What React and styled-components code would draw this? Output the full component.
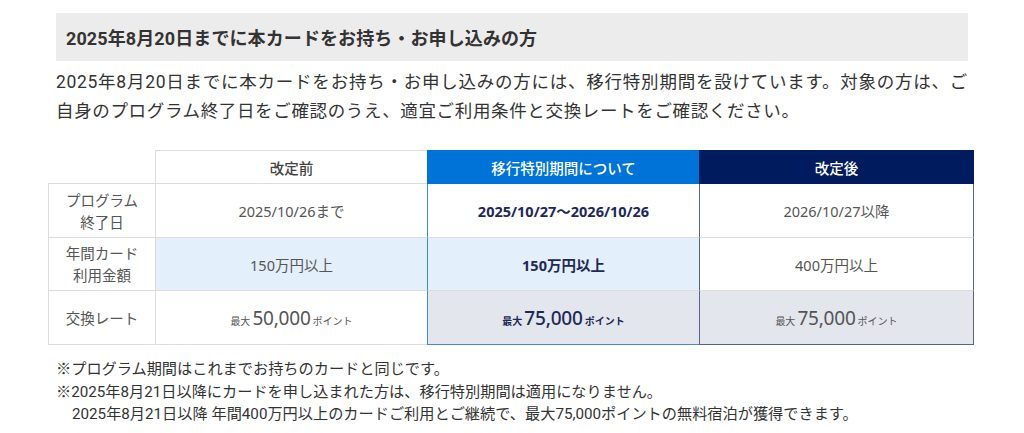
import React from "react";
import styled, { createGlobalStyle } from "styled-components";

const GlobalStyle = createGlobalStyle`
  body {
    margin: 0;
    background: #fff;
    color: #333;
    font-family: "Roboto", "Noto Sans CJK JP", sans-serif;
  }
`;

const LINE = "#dcdcdc";
const BLUE = "#0073d8";
const BLUE_LINE = "#3d8ae0";
const NAVY = "#001b5e";
const NAVY_LINE = "#56638a";

const Page = styled.section`
  width: 912px;
  padding: 13px 0 0 56px;
`;

const Heading = styled.h3`
  margin: 0;
  height: 48px;
  display: flex;
  align-items: center;
  padding: 0 10px;
  background: #ececec;
  font-size: 18px;
  letter-spacing: 0.1px;
  font-weight: 700;
  color: #333;
`;

const Lead = styled.p`
  margin: 7px 0 0;
  font-size: 17.5px;
  letter-spacing: 0.65px;
  line-height: 29px;
  text-align: justify;
  color: #333;
`;

const Table = styled.table`
  margin: 24px 0 0 -8px;
  width: 926px;
  border-collapse: separate;
  border-spacing: 0;
  table-layout: fixed;
  font-family: "Noto Sans", "Noto Sans CJK JP", sans-serif;
  font-size: 14.5px;
  color: #555;
`;

const Row = styled.tr`
  height: ${p => p.$h}px;
`;

const headStyles = {
  empty: `background: #fff; border-bottom: 1px solid ${LINE};`,
  base: `background: #fff; color: #444; border: 1px solid ${LINE}; border-right: 0;`,
  trans: `background: ${BLUE}; color: #fff; border: 1px solid ${BLUE}; border-right: 0;`,
  after: `background: ${NAVY}; color: #fff; border: 1px solid ${NAVY};`
};

const HeadCell = styled.th`
  padding: 0;
  font-weight: 500;
  font-size: 14.5px;
  text-align: center;
  ${p => headStyles[p.$tone]}
`;

const Label = styled.th`
  padding: 0;
  font-weight: 400;
  line-height: 22px;
  text-align: center;
  color: #555;
  border-left: 1px solid ${LINE};
  border-bottom: 1px solid ${LINE};
`;

const fills = {
  none: "#fff",
  blue: "#e3effa",
  gray: "#e4e6ed"
};

const lines = {
  base: LINE,
  trans: BLUE_LINE,
  after: NAVY_LINE
};

const Cell = styled.td`
  padding: 0;
  text-align: center;
  background: ${p => fills[p.$fill || "none"]};
  border-left: 1px solid ${p => lines[p.$tone]};
  border-bottom: 1px solid ${p => (p.$last ? lines[p.$tone] : LINE)};
  border-right: ${p => (p.$tone === "after" ? `1px solid ${NAVY_LINE}` : "0")};
  color: ${p => (p.$tone === "trans" ? "#1c2957" : "#555")};
  font-weight: ${p => (p.$tone === "trans" ? 700 : 400)};
`;

const Points = styled.span`
  display: inline-flex;
  align-items: baseline;
  gap: 2px;
`;

const Small = styled.span`
  font-size: 10px;
`;

const Big = styled.span`
  font-size: 19px;
  font-weight: ${p => (p.$strong ? 500 : 400)};
  letter-spacing: -0.2px;
`;

const Notes = styled.div`
  margin-top: 13px;
  font-size: 15.2px;
  line-height: 22.5px;
  color: #333;
`;

const Note = styled.p`
  margin: 0;
  padding-left: ${p => (p.$indent ? 16 : 0)}px;
`;

const rows = [
  {
    label: ["プログラム", "終了日"],
    h: 54,
    cells: ["2025/10/26まで", "2025/10/27〜2026/10/26", "2026/10/27以降"],
    fills: ["none", "none", "none"]
  },
  {
    label: ["年間カード", "利用金額"],
    h: 53,
    cells: ["150万円以上", "150万円以上", "400万円以上"],
    fills: ["blue", "blue", "none"]
  },
  {
    label: ["交換レート"],
    h: 54,
    points: ["50,000", "75,000", "75,000"],
    fills: ["none", "gray", "gray"]
  }
];

const tones = ["base", "trans", "after"];

export default function App() {
  return (
    <>
      <GlobalStyle />
      <Page>
        <Heading>2025年8月20日までに本カードをお持ち・お申し込みの方</Heading>
        <Lead>
          2025年8月20日までに本カードをお持ち・お申し込みの方には、移行特別期間を設けています。対象の方は、ご自身のプログラム終了日をご確認のうえ、適宜ご利用条件と交換レートをご確認ください。
        </Lead>
        <Table>
          <colgroup>
            <col style={{ width: 107 }} />
            <col style={{ width: 272 }} />
            <col style={{ width: 272 }} />
            <col style={{ width: 275 }} />
          </colgroup>
          <thead>
            <Row $h={34}>
              <HeadCell $tone="empty" />
              <HeadCell $tone="base">改定前</HeadCell>
              <HeadCell $tone="trans">移行特別期間について</HeadCell>
              <HeadCell $tone="after">改定後</HeadCell>
            </Row>
          </thead>
          <tbody>
            {rows.map((row, r) => (
              <Row $h={row.h} key={r}>
                <Label>
                  {row.label.map((l, i) => (
                    <React.Fragment key={i}>
                      {i > 0 && <br />}
                      {l}
                    </React.Fragment>
                  ))}
                </Label>
                {tones.map((tone, c) => (
                  <Cell
                    key={tone}
                    $tone={tone}
                    $fill={row.fills[c]}
                    $last={r === rows.length - 1}>
                    {row.points ? (
                      <Points>
                        <Small>最大</Small>
                        <Big $strong={tone === "trans"}>{row.points[c]}</Big>
                        <Small>ポイント</Small>
                      </Points>
                    ) : (
                      row.cells[c]
                    )}
                  </Cell>
                ))}
              </Row>
            ))}
          </tbody>
        </Table>
        <Notes>
          <Note>※プログラム期間はこれまでお持ちのカードと同じです。</Note>
          <Note>※2025年8月21日以降にカードを申し込まれた方は、移行特別期間は適用になりません。</Note>
          <Note $indent>
            2025年8月21日以降 年間400万円以上のカードご利用とご継続で、最大75,000ポイントの無料宿泊が獲得できます。
          </Note>
        </Notes>
      </Page>
    </>
  );
}
